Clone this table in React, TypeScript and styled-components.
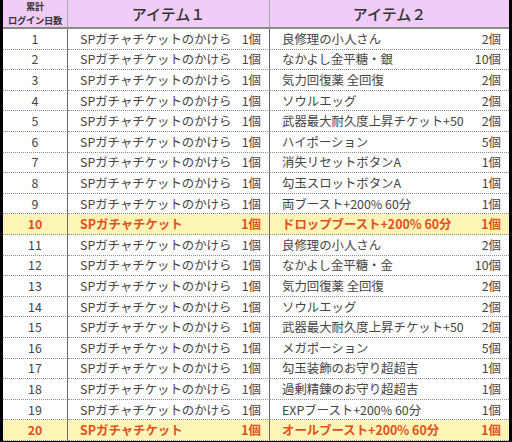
import React from "react";
import styled, { createGlobalStyle } from "styled-components";

const Global = createGlobalStyle`
  html, body { margin: 0; padding: 0; background: #000; }
  body { font-family: "Noto Sans CJK JP", "Noto Sans", sans-serif; }
`;

const Frame = styled.div`
  width: 512px;
  height: 442px;
  box-sizing: border-box;
  padding: 0 3px 1px 3px;
  background: #000;
`;

const Table = styled.div`
  height: 100%;
  background: #fff;
  display: grid;
  grid-template-columns: 65px 202px 1fr;
  grid-template-rows: 29px repeat(20, 1fr);
`;

const HeadCell = styled.div<{ $small?: boolean; $last?: boolean }>`
  background: #f0cdf7;
  border-bottom: 2px solid #8a8a8a;
  border-right: ${(p) => (p.$last ? "none" : "1px solid #a8a8a8")};
  display: flex;
  align-items: center;
  justify-content: center;
  flex-direction: column;
  color: #333;
  font-weight: ${(p) => (p.$small ? 700 : 500)};
  font-size: ${(p) => (p.$small ? "9.3px" : "15px")};
  line-height: ${(p) => (p.$small ? "13.5px" : "1")};
  letter-spacing: ${(p) => (p.$small ? "-0.3px" : "0")};
  white-space: nowrap;
  overflow: hidden;
  box-sizing: border-box;
`;

const HeadLine = styled.span`
  display: block;
  height: 13.5px;
`;

const Cell = styled.div<{ $hl?: boolean; $center?: boolean; $last?: boolean }>`
  background: ${(p) => (p.$hl ? "#fdf4b6" : "#fff")};
  color: ${(p) => (p.$hl ? "#e4501c" : "#444")};
  font-weight: ${(p) => (p.$hl ? 700 : 400)};
  font-size: 12.4px;
  border-bottom: 1px dotted #8c8c8c;
  border-right: ${(p) => (p.$last ? "none" : "1px solid #6a6a6a")};
  display: flex;
  align-items: center;
  justify-content: ${(p) => (p.$center ? "center" : "space-between")};
  padding: ${(p) => (p.$center ? "0" : "0 8px 0 12px")};
  white-space: nowrap;
  overflow: hidden;
  box-sizing: border-box;
`;

const Name = styled.span``;
const Count = styled.span``;

type Row = { day: number; a: string; ac: string; b: string; bc: string };

const rows: Row[] = [
  { day: 1, a: "SPガチャチケットのかけら", ac: "1個", b: "良修理の小人さん", bc: "2個" },
  { day: 2, a: "SPガチャチケットのかけら", ac: "1個", b: "なかよし金平糖・銀", bc: "10個" },
  { day: 3, a: "SPガチャチケットのかけら", ac: "1個", b: "気力回復薬 全回復", bc: "2個" },
  { day: 4, a: "SPガチャチケットのかけら", ac: "1個", b: "ソウルエッグ", bc: "2個" },
  { day: 5, a: "SPガチャチケットのかけら", ac: "1個", b: "武器最大耐久度上昇チケット+50", bc: "2個" },
  { day: 6, a: "SPガチャチケットのかけら", ac: "1個", b: "ハイポーション", bc: "5個" },
  { day: 7, a: "SPガチャチケットのかけら", ac: "1個", b: "消失リセットボタンA", bc: "1個" },
  { day: 8, a: "SPガチャチケットのかけら", ac: "1個", b: "勾玉スロットボタンA", bc: "1個" },
  { day: 9, a: "SPガチャチケットのかけら", ac: "1個", b: "両ブースト+200% 60分", bc: "1個" },
  { day: 10, a: "SPガチャチケット", ac: "1個", b: "ドロップブースト+200% 60分", bc: "1個" },
  { day: 11, a: "SPガチャチケットのかけら", ac: "1個", b: "良修理の小人さん", bc: "2個" },
  { day: 12, a: "SPガチャチケットのかけら", ac: "1個", b: "なかよし金平糖・金", bc: "10個" },
  { day: 13, a: "SPガチャチケットのかけら", ac: "1個", b: "気力回復薬 全回復", bc: "2個" },
  { day: 14, a: "SPガチャチケットのかけら", ac: "1個", b: "ソウルエッグ", bc: "2個" },
  { day: 15, a: "SPガチャチケットのかけら", ac: "1個", b: "武器最大耐久度上昇チケット+50", bc: "2個" },
  { day: 16, a: "SPガチャチケットのかけら", ac: "1個", b: "メガポーション", bc: "5個" },
  { day: 17, a: "SPガチャチケットのかけら", ac: "1個", b: "勾玉装飾のお守り超超吉", bc: "1個" },
  { day: 18, a: "SPガチャチケットのかけら", ac: "1個", b: "過剰精錬のお守り超超吉", bc: "1個" },
  { day: 19, a: "SPガチャチケットのかけら", ac: "1個", b: "EXPブースト+200% 60分", bc: "1個" },
  { day: 20, a: "SPガチャチケット", ac: "1個", b: "オールブースト+200% 60分", bc: "1個" },
];

export default function App() {
  return (
    <>
      <Global />
      <Frame>
        <Table>
          <HeadCell $small>
            <HeadLine>累計</HeadLine>
            <HeadLine>ログイン日数</HeadLine>
          </HeadCell>
          <HeadCell>アイテム１</HeadCell>
          <HeadCell $last>アイテム２</HeadCell>
          {rows.map((r) => {
            const hl = r.day % 10 === 0;
            return (
              <React.Fragment key={r.day}>
                <Cell $hl={hl} $center>{r.day}</Cell>
                <Cell $hl={hl}>
                  <Name>{r.a}</Name>
                  <Count>{r.ac}</Count>
                </Cell>
                <Cell $hl={hl} $last>
                  <Name>{r.b}</Name>
                  <Count>{r.bc}</Count>
                </Cell>
              </React.Fragment>
            );
          })}
        </Table>
      </Frame>
    </>
  );
}
